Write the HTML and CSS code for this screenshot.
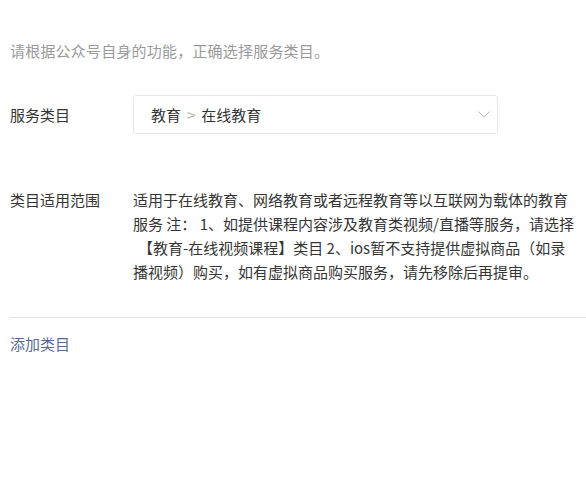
FILE: index.html
```html
<!DOCTYPE html>
<html lang="zh">
<head>
<meta charset="utf-8">
<link rel="stylesheet" href="styles.css">
</head>
<body>
<div class="page">
  <p class="tip">请根据公众号自身的功能，正确选择服务类目。</p>
  <div class="row row-select">
    <div class="label">服务类目</div>
    <div class="select">
      <span class="value">教育<span class="sep">&gt;</span>在线教育</span>
      <svg class="chev" width="12" height="7" viewBox="0 0 12 7"><path d="M0.5 0.5 L6 6 L11.5 0.5" fill="none" stroke="#b2b2b2" stroke-width="1"/></svg>
    </div>
  </div>
  <div class="row row-scope">
    <div class="label">类目适用范围</div>
    <div class="desc">适用于在线教育、网络教育或者远程教育等以互联网为载体的教育服务 注： 1、如提供课程内容涉及教育类视频/直播等服务，请选择<span class="bracket">【教育-在线视频课程】</span>类目 2、ios暂不支持提供虚拟商品（如录播视频）购买，如有虚拟商品购买服务，请先移除后再提审。</div>
  </div>
  <div class="divider"></div>
  <a class="add">添加类目</a>
</div>
</body>
</html>
```
FILE: styles.css
```css
html, body {
  margin: 0;
  padding: 0;
  background: #fff;
}
body {
  font-family: "Noto Sans CJK SC", "Noto Sans", sans-serif;
  font-size: 15px;
  color: #353535;
  text-spacing-trim: space-all;
}
.page {
  padding: 39px 0 0 10px;
}
.tip {
  margin: 0;
  color: #9a9a9a;
  line-height: 24px;
  letter-spacing: 0.2px;
}
.row {
  display: flex;
}
.label {
  width: 123px;
  flex: none;
  line-height: 24px;
}
.row-select {
  margin-top: 32px;
  align-items: center;
}
.select {
  height: 37px;
  border: 1px solid #e7e7eb;
  border-radius: 3px;
  display: flex;
  align-items: center;
  justify-content: space-between;
  padding: 0 7px 0 17px;
  box-sizing: content-box;
  width: 339px;
}
.value {
  color: #353535;
}
.sep {
  color: #b2b2b2;
  margin: 0 6px;
}
.chev {
  display: block;
}
.row-scope {
  margin-top: 54px;
}
.desc {
  width: 446px;
  line-height: 24px;
  color: #353535;
}
.bracket {
  padding-left: 5px;
}
.divider {
  margin-top: 33px;
  height: 1px;
  background: #e5e5e5;
}
.add {
  display: block;
  margin-top: 14px;
  color: #576b95;
  line-height: 24px;
}
```
